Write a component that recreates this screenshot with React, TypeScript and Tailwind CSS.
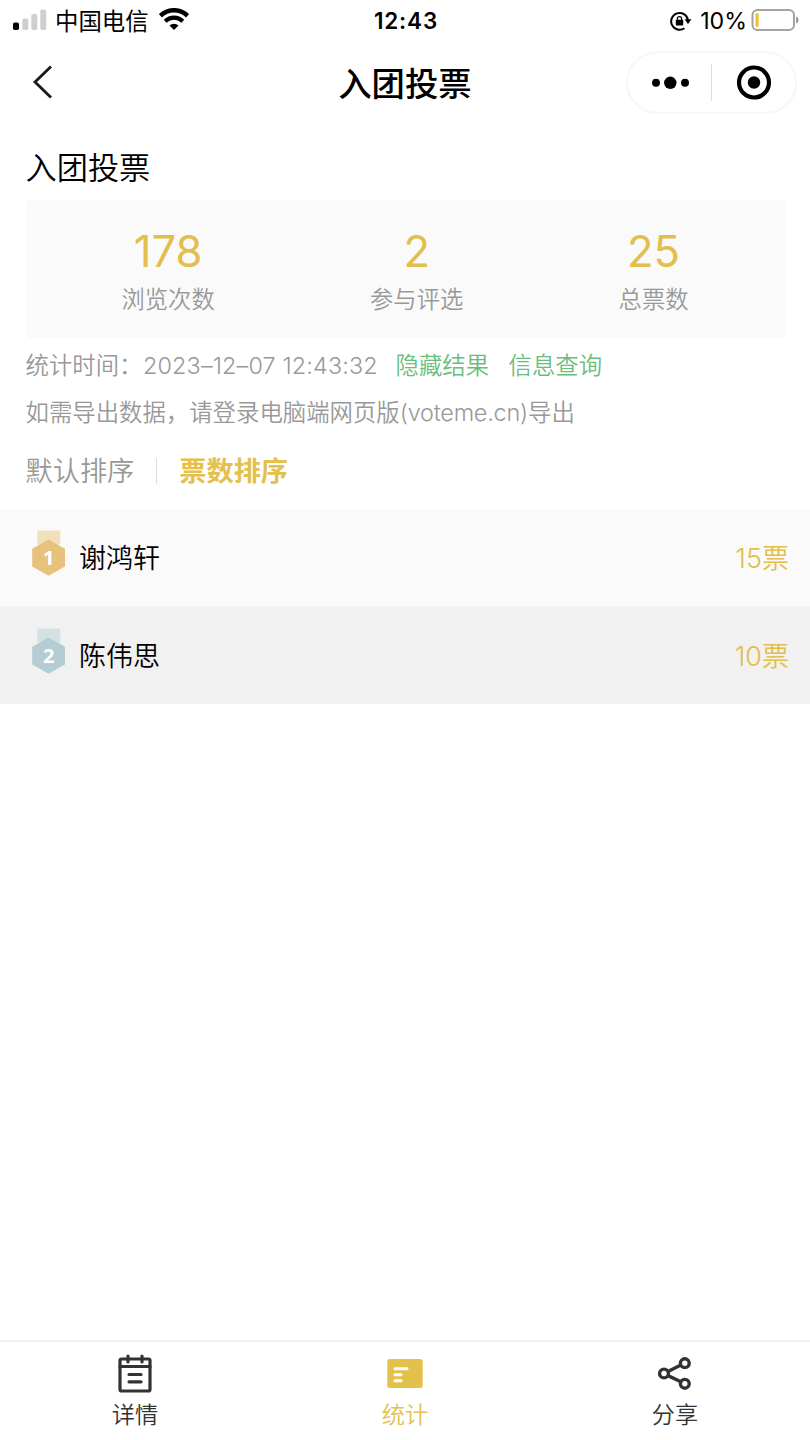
const stats = [
  { value: "178", label: "浏览次数" },
  { value: "2", label: "参与评选" },
  { value: "25", label: "总票数" },
];

const candidates = [
  { rank: 1, name: "谢鸿轩", votes: "15票", row: "h-[97px] bg-[#fafafa]", ribbon: "#f1e0b9", medal: "#e6c27c" },
  { rank: 2, name: "陈伟思", votes: "10票", row: "h-[98px] bg-[#f1f1f1]", ribbon: "#d3e1e2", medal: "#b4cdd4" },
];

const StatusBar = () => (
  <div className="grid h-[41px] grid-cols-3 items-center pl-[13px] pr-[11px]">
    <div className="flex items-center">
      <svg className="mb-0.5" width="34" height="22" viewBox="0 0 34 22">
        <rect x="0" y="13.5" width="6" height="7.5" rx="1.8" fill="#000" />
        <rect x="9.3" y="9.5" width="6" height="11.5" rx="1.8" fill="#cfcfcf" />
        <rect x="18.3" y="5" width="6" height="16" rx="1.8" fill="#cfcfcf" />
        <rect x="27.3" y="0.5" width="6" height="20.5" rx="1.8" fill="#cfcfcf" />
      </svg>
      <span className="ml-2 pt-px text-[23.4px] leading-[41px]">中国电信</span>
      <svg className="mb-1 ml-2.5" width="30" height="22" viewBox="0 0 30 22" fill="none" stroke="#000">
        <path d="M1.4 7.8a19.5 19.5 0 0 1 27.2 0" strokeWidth="4.6" />
        <path d="M6.2 13.3a12.5 12.5 0 0 1 17.6 0" strokeWidth="4.2" />
        <path d="M10.5 17.6a6.5 6.5 0 0 1 9 0L15 22z" fill="#000" stroke="none" />
      </svg>
    </div>
    <div className="pb-0.5 text-center text-[22.5px] font-semibold leading-[39px] tracking-[0.8px]">12:43</div>
    <div className="flex items-center justify-end">
      <svg width="22" height="20" viewBox="0 0 22 20" fill="none" stroke="#000" strokeWidth="2">
        <path d="M14.5 17.2A8.4 8.4 0 1 1 17.9 9" />
        <path d="M14.6 8.3h6.8l-3.4 4.8z" fill="#000" stroke="none" />
        <rect x="5.8" y="8.8" width="7.4" height="5.8" rx="0.8" fill="#000" stroke="none" />
        <path d="M7.4 9.5V7.8a2.1 2.1 0 0 1 4.2 0v1.7" strokeWidth="1.3" />
      </svg>
      <span className="ml-2 text-[23.2px] leading-[41px]">10%</span>
      <svg className="mb-[3px] ml-1" width="48" height="24" viewBox="0 0 48 24">
        <rect x="1.5" y="2" width="41.5" height="20" rx="5" fill="none" stroke="#a3a3a3" strokeWidth="2" />
        <rect x="4.5" y="5" width="3.2" height="14" rx="1.2" fill="#eec33c" />
        <path d="M45.2 8.5c3 1.2 3 5.8 0 7z" fill="#8f8f8f" />
      </svg>
    </div>
  </div>
);

const NavBar = () => (
  <div className="grid h-[83px] grid-cols-3 items-center px-[13px]">
    <svg className="mb-0.5 ml-[19px]" width="22" height="36" viewBox="0 0 22 36" fill="none" stroke="#1a1a1a" strokeWidth="2.8">
      <path d="M19 2.5 3 18l16 15.5" />
    </svg>
    <h1 className="pt-[3px] text-center text-[33.4px] font-medium leading-[80px]">入团投票</h1>
    <div className="flex h-[63px] w-[171px] items-center justify-self-end rounded-full border-2 border-[#f7f7f7]">
      <svg className="ml-[23px]" width="40" height="14" viewBox="0 0 40 14">
        <circle cx="5" cy="6.8" r="4" />
        <circle cx="19.3" cy="6.8" r="6.2" />
        <circle cx="34" cy="6.8" r="4" />
      </svg>
      <div className="ml-5 h-[37px] w-px bg-[#dedede]" />
      <svg className="ml-6" width="36" height="36" viewBox="0 0 36 36">
        <circle cx="18" cy="17.5" r="15" fill="none" stroke="#000" strokeWidth="4.2" />
        <circle cx="18" cy="17.5" r="6.2" />
      </svg>
    </div>
  </div>
);

const StatsCard = () => (
  <div className="flex h-[138px] justify-between rounded-sm bg-[#fafafa] px-24 pt-6">
    {stats.map((s) => (
      <div key={s.label} className="flex flex-col items-center">
        <span className="text-[43.5px] leading-[54px] text-[#e2be4b]">{s.value}</span>
        <span className="text-[23.3px] font-[350] leading-[44px] text-[#999]">{s.label}</span>
      </div>
    ))}
  </div>
);

const Medal = ({ rank, ribbon, medal }: { rank: number; ribbon: string; medal: string }) => (
  <svg className="mb-2" width="34" height="47" viewBox="0 0 34 47">
    <rect x="5.3" y="0.5" width="23" height="14" fill={ribbon} />
    <path d="M16.5 9.5 33 18.7v17.8l-16.5 9.2L0.2 36.5V18.7z" fill={medal} />
    <text x="16.8" y="35" textAnchor="middle" fontSize="20" fontWeight="700" fill="#fff" className="font-['Open_Sans',sans-serif]">
      {rank}
    </text>
  </svg>
);

const TabBar = () => (
  <div className="grid h-[100px] grid-cols-3 border-t-2 border-[#f0f0f0] text-[23.2px] font-[350] leading-8 text-[#333]">
    <div className="flex flex-col items-center pt-[11px]">
      <svg width="36" height="42" viewBox="0 0 36 42" fill="none" stroke="#333" strokeWidth="3.2" strokeLinecap="round" strokeLinejoin="round">
        <rect x="3" y="6" width="30" height="32" rx="1.5" />
        <path d="M3 13.5h30M11 3v6M25 3v6M12 21.5h12M12 28.8h12" />
      </svg>
      <span className="mt-1">详情</span>
    </div>
    <div className="flex flex-col items-center pt-[11px] text-[#e4c04d]">
      <svg width="36" height="42" viewBox="0 0 36 42">
        <rect x="0.3" y="6" width="35.4" height="29" rx="2.5" fill="#e4c04d" />
        <path d="M8 15.8h12M8 21.8h6M8 27.8h6" stroke="#fff" strokeWidth="3" strokeLinecap="round" />
      </svg>
      <span className="mt-1">统计</span>
    </div>
    <div className="flex flex-col items-center pt-[11px]">
      <svg width="36" height="42" viewBox="0 0 36 42" fill="none" stroke="#333" strokeWidth="3.4">
        <circle cx="7" cy="20.5" r="4.4" />
        <circle cx="27.8" cy="10.2" r="4.4" />
        <circle cx="27.8" cy="30.8" r="4.4" />
        <path d="M11 18.4 23.8 12M11 22.6l12.8 6.2" />
      </svg>
      <span className="mt-1">分享</span>
    </div>
  </div>
);

const App = () => {
  return (
    <div className="flex h-[1440px] w-[810px] flex-col whitespace-nowrap bg-white font-['Inter','Noto_Sans_CJK_SC',sans-serif] text-black">
      <StatusBar />
      <NavBar />
      <main className="grow">
        <section className="px-[25.5px]">
          <h2 className="h-[76px] pt-[13px] text-[31.2px] font-[350] leading-[62px]">入团投票</h2>
          <StatsCard />
          <div className="flex h-[54px] pt-0.5 text-[23.4px] font-[350] leading-[51px] text-[#999]">
            <span className="w-[117.5px]">统计时间：</span>
            <span className="w-[252.5px] tracking-[0.14px]">2023–12–07 12:43:32</span>
            <span className="w-[113px] text-[#69bd7e]">隐藏结果</span>
            <span className="text-[#69bd7e]">信息查询</span>
          </div>
          <p className="h-[40px] pt-0.5 text-[23.4px] font-[350] leading-[38px] text-[#999]">
            如需导出数据，请登录电脑端网页版<span className="tracking-[-0.2px]">(voteme.cn)</span>导出
          </p>
          <div className="flex h-[77px] items-center text-[27.2px] leading-[77px] text-[#999]">
            <span className="pt-px font-[350]">默认排序</span>
            <div className="mx-[22px] h-[26px] w-px bg-[#ddd]" />
            <span className="pt-px font-semibold text-[#e4c04d]">票数排序</span>
          </div>
        </section>
        <ul>
          {candidates.map((c) => (
            <li key={c.rank} className={`flex items-center pl-8 pr-[21px] text-[27px] font-[350] ${c.row}`}>
              <Medal rank={c.rank} ribbon={c.ribbon} medal={c.medal} />
              <span className="ml-[13px] grow pt-1">{c.name}</span>
              <span className="pt-1 text-[#e2be4b]">{c.votes}</span>
            </li>
          ))}
        </ul>
      </main>
      <TabBar />
    </div>
  );
};

export default App;
